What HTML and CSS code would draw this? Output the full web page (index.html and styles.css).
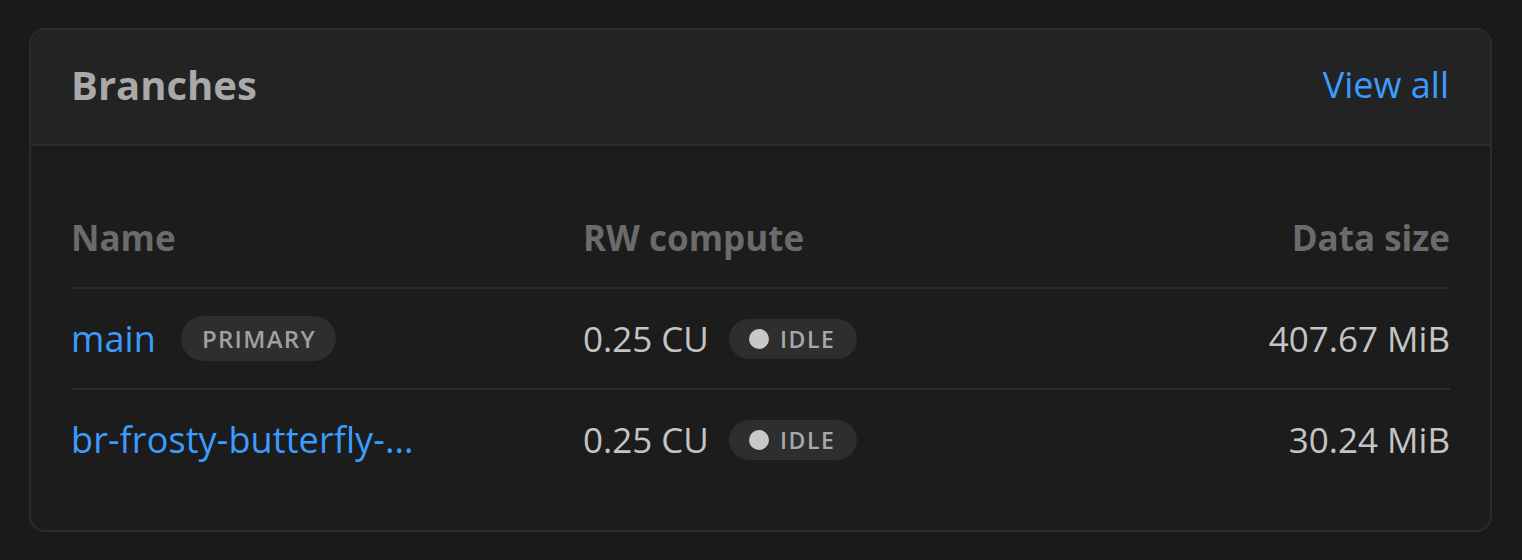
FILE: index.html
```html
<!DOCTYPE html>
<html lang="en">
<head>
<meta charset="utf-8">
<title>Branches</title>
<link rel="stylesheet" href="styles.css">
</head>
<body>
<section class="card">
  <header class="card-head">
    <h2 class="title">Branches</h2>
    <a class="view-all" href="#">View all</a>
  </header>
  <div class="card-body">
    <div class="table">
      <div class="row head">
        <div class="cell name">Name</div>
        <div class="cell compute">RW compute</div>
        <div class="cell size">Data size</div>
      </div>
      <div class="row">
        <div class="cell name"><a class="branch" href="#">main</a><span class="tag">PRIMARY</span></div>
        <div class="cell compute"><span class="cu">0.25 CU</span><span class="status"><span class="dot"></span>IDLE</span></div>
        <div class="cell size">407.67 MiB</div>
      </div>
      <div class="row">
        <div class="cell name"><a class="branch" href="#">br-frosty-butterfly-...</a></div>
        <div class="cell compute"><span class="cu">0.25 CU</span><span class="status"><span class="dot"></span>IDLE</span></div>
        <div class="cell size">30.24 MiB</div>
      </div>
    </div>
  </div>
</section>
</body>
</html>
```

FILE: styles.css
```css
* { box-sizing: border-box; }
html, body { margin: 0; padding: 0; }
body {
  background: #1a1a1a;
  font-family: "Open Sans", "Noto Sans", sans-serif;
  padding: 28px 30px 0 29px;
}
.card {
  border: 2px solid #2c2c2c;
  border-radius: 16px;
  background: #1c1c1c;
  overflow: hidden;
  height: 504px;
}
.card-head {
  display: flex;
  align-items: center;
  justify-content: space-between;
  height: 116px;
  padding: 0 41px 5px 40px;
  background: #232323;
  border-bottom: 2px solid #2c2c2c;
}
.title {
  margin: 0;
  font-size: 40px;
  font-weight: 700;
  color: #a9a9a9;
}
.view-all {
  font-size: 36px;
  color: #3b9cff;
  text-decoration: none;
}
.card-body {
  padding: 41px 40px 40px 40px;
}
.row {
  display: grid;
  grid-template-columns: 491px 1fr auto;
  align-items: center;
  height: 101px;
  border-top: 2px solid #2c2c2c;
}
.row.head {
  height: 100px;
  border-top: none;
  font-size: 35px;
  font-weight: 700;
  color: #6b6b6b;
}
.cell { display: flex; align-items: center; min-width: 0; white-space: nowrap; }
.cell.compute { padding-left: 21px; }
.cell.size { justify-content: flex-end; }
.row:not(.head) .cell { font-size: 35px; color: #c4c4c4; }
.branch {
  color: #3b9cff;
  font-size: 36px;
  text-decoration: none;
  white-space: nowrap;
  letter-spacing: 0.1px;
}
.tag {
  margin-left: 25px;
  height: 45px;
  padding: 0 20px 0 21px;
  border-radius: 23px;
  background: #2e2e2e;
  color: #a0a0a0;
  font-size: 24px;
  font-weight: 600;
  letter-spacing: 1.3px;
  display: inline-flex;
  align-items: center;
}
.status {
  margin-left: 20px;
  height: 40px;
  padding: 0 21px 0 20px;
  border-radius: 20px;
  background: #2e2e2e;
  color: #a8a8a8;
  font-size: 23px;
  font-weight: 600;
  letter-spacing: 1.6px;
  display: inline-flex;
  align-items: center;
}
.dot {
  width: 20px;
  height: 20px;
  border-radius: 50%;
  background: #c8c8c8;
  margin-right: 11px;
}
```
